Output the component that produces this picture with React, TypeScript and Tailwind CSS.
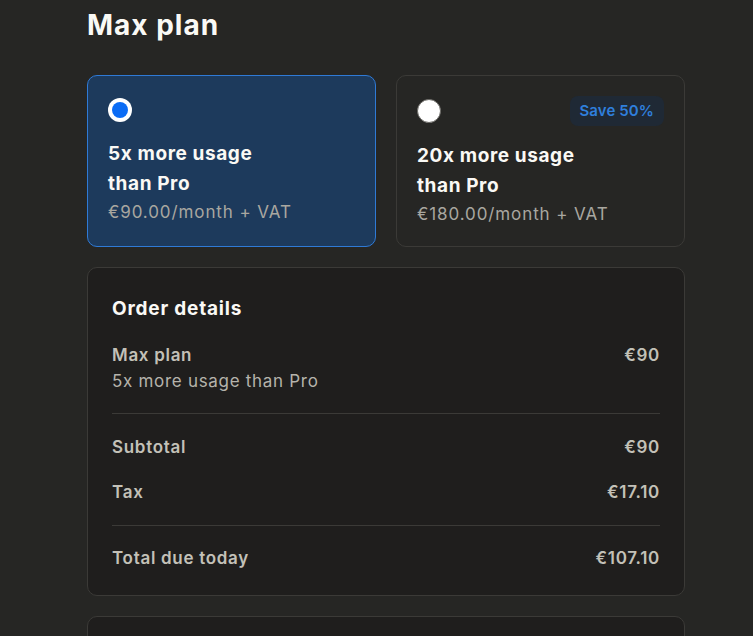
import React from "react";

function Radio({ checked }: { checked: boolean }) {
  return checked ? (
    <span className="block w-6 h-6 rounded-full bg-white flex items-center justify-center">
      <span className="block w-[16px] h-[16px] rounded-full bg-[#0b6cf5]" />
    </span>
  ) : (
    <span className="block w-6 h-6 rounded-full bg-white border border-[#6b6a66]" />
  );
}

function PlanCard({
  selected,
  title1,
  title2,
  price,
  badge,
}: {
  selected: boolean;
  title1: string;
  title2: string;
  price: string;
  badge?: string;
}) {
  return (
    <div
      className={
        selected
          ? "rounded-[10px] border border-[#2f7ad6] bg-[#1d3a5c] px-5 pt-5 pb-[19px]"
          : "rounded-[10px] border border-[#3b3a37] bg-[#262624] px-5 pt-5 pb-[19px]"
      }
    >
      <div className="flex items-center justify-between min-h-[28px]">
        <Radio checked={selected} />
        {badge && (
          <span className="h-[30px] px-[10px] rounded-[8px] bg-[#1f2935] text-[#2f7fdc] text-[15px] font-semibold tracking-[0.1px] flex items-center">
            {badge}
          </span>
        )}
      </div>
      <div className="mt-[15px] text-[19px] leading-[30px] font-bold tracking-[0.6px] text-[#faf9f5]">
        <div>{title1}</div>
        <div>{title2}</div>
      </div>
      <div className="text-[17px] leading-[26px] tracking-[0.9px] text-[#a9a7a0]">{price}</div>
    </div>
  );
}

function Row({ label, value }: { label: string; value: string }) {
  return (
    <div className="flex items-center justify-between text-[17px] leading-[26px] font-semibold tracking-[0.7px] text-[#c3c1b8]">
      <span>{label}</span>
      <span>{value}</span>
    </div>
  );
}

export default function App() {
  return (
    <div
      className="min-h-screen w-full bg-[#262624]"
      style={{ fontFamily: "Inter, 'Noto Sans', sans-serif" }}
    >
      <div className="ml-[87px] w-[598px] pt-[7px]">
        <h1 className="text-[28px] leading-[36px] font-bold text-[#faf9f5] tracking-[1px]">
          Max plan
        </h1>
        <div className="mt-[32px] grid grid-cols-2 gap-5">
          <PlanCard
            selected
            title1="5x more usage"
            title2="than Pro"
            price="€90.00/month + VAT"
          />
          <PlanCard
            selected={false}
            title1="20x more usage"
            title2="than Pro"
            price="€180.00/month + VAT"
            badge="Save 50%"
          />
        </div>

        <div className="mt-5 rounded-[10px] border border-[#3b3a37] bg-[#1f1e1d] px-6 pt-[27px] pb-6">
          <h2 className="text-[19px] leading-[28px] font-bold tracking-[0.8px] text-[#faf9f5]">Order details</h2>
          <div className="mt-[19px] pb-[19px] border-b border-[#3b3a37]">
            <Row label="Max plan" value="€90" />
            <div className="text-[17px] leading-[26px] tracking-[0.7px] text-[#b5b3ab]">5x more usage than Pro</div>
          </div>
          <div className="py-5 flex flex-col gap-[19px] border-b border-[#3b3a37]">
            <Row label="Subtotal" value="€90" />
            <Row label="Tax" value="€17.10" />
          </div>
          <div className="pt-[19px]">
            <Row label="Total due today" value="€107.10" />
          </div>
        </div>

        <div className="mt-5 h-[80px] rounded-t-[10px] border border-[#3b3a37] bg-[#1f1e1d]" />
      </div>
    </div>
  );
}
